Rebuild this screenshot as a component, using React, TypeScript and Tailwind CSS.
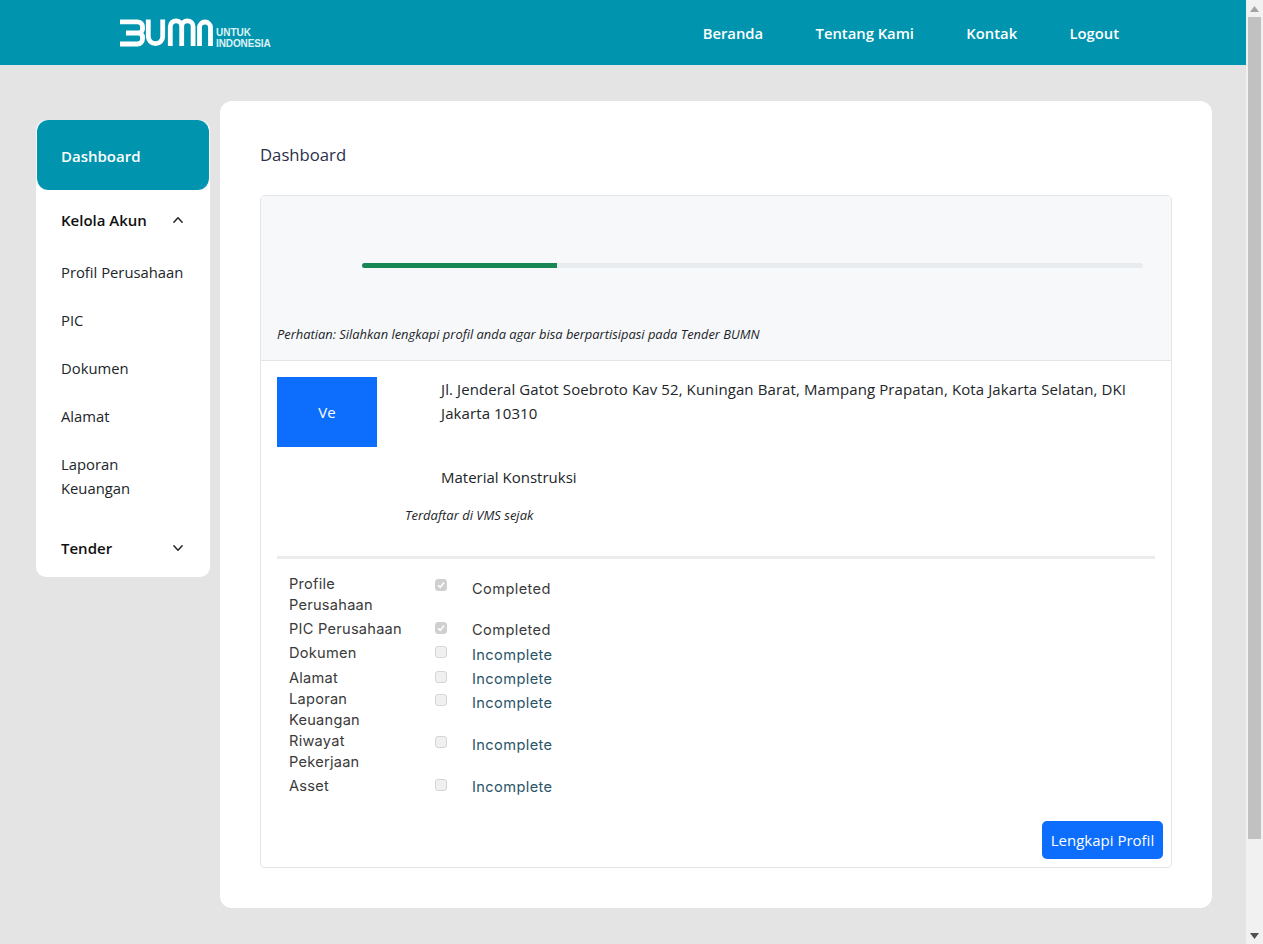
import React from "react";

const seg = "font-['Open_Sans','Noto_Sans',sans-serif]";

function Logo() {
  return (
    <div className="flex items-center">
      <svg width="96" height="30" viewBox="0 0 96 30" fill="none" stroke="#fff" strokeWidth="4.8">
        <path d="M0 3.8H17.5A5 5 0 0 1 22.5 8.8V11A4 4 0 0 1 18.5 15H6M18.5 15A4 4 0 0 1 22.5 19V21A5 5 0 0 1 17.5 26H0" />
        <path d="M28.3 1.5V18.5A7.2 7.2 0 0 0 42.7 18.5V1.5" />
        <path d="M50.3 28V8.5A5.7 5.7 0 0 1 61.7 8.5V28M61.7 8.5A5.7 5.7 0 0 1 73.1 8.5V28" />
        <path d="M79.5 28V9.5A5.5 5.5 0 0 1 90.5 9.5V28" />
      </svg>
      <div className="mt-[10px] font-['Liberation_Sans',sans-serif] text-[10px] leading-[11px] font-bold text-[#dff3f7]">
        <div>UNTUK</div>
        <div className="tracking-[-0.1px]">INDONESIA</div>
      </div>
    </div>
  );
}

function Chevron({ up }: { up?: boolean }) {
  return (
    <svg width="12" height="12" viewBox="0 0 16 16" fill="none" stroke="#212529" strokeWidth="2" strokeLinecap="round" strokeLinejoin="round">
      <path d={up ? "M2.5 11L8 5l5.5 6" : "M2.5 5L8 11l5.5-6"} />
    </svg>
  );
}

function Check({ checked }: { checked?: boolean }) {
  return (
    <span className={"flex h-3 w-3 items-center justify-center rounded-[3px] border " + (checked ? "border-[#cfcfcf] bg-[#cfcfcf]" : "border-[#d5d5d5] bg-[#f0f0f0]")}>
      {checked && (
        <svg width="10" height="10" viewBox="0 0 10 10" fill="none" stroke="#fff" strokeWidth="1.6">
          <path d="M2 5.2L4.2 7.4 8 2.6" />
        </svg>
      )}
    </span>
  );
}

const rows = [
  { l: ["Profile", "Perusahaan"], done: true, h: "h-[45px]", lab: "pt-0", box: "pt-[5px]", st: "pt-[5px]" },
  { l: ["PIC Perusahaan"], done: true, h: "h-[23px]", lab: "pt-0", box: "pt-[3px]", st: "pt-[1px]" },
  { l: ["Dokumen"], done: false, h: "h-[25px]", lab: "pt-[1px]", box: "pt-[4px]", st: "pt-[3px]" },
  { l: ["Alamat"], done: false, h: "h-[22px]", lab: "pt-[1px]", box: "pt-[4px]", st: "pt-[2px]" },
  { l: ["Laporan", "Keuangan"], done: false, h: "h-[42px]", lab: "pt-0", box: "pt-[5px]", st: "pt-[4px]" },
  { l: ["Riwayat", "Pekerjaan"], done: false, h: "h-[45px]", lab: "pt-0", box: "pt-[5px]", st: "pt-[4px]" },
  { l: ["Asset"], done: false, h: "h-[24px]", lab: "pt-0", box: "pt-[3px]", st: "pt-[1px]" },
];

export default function App() {
  return (
    <div className={"flex h-[944px] w-full overflow-hidden bg-[#e4e4e4] text-[#212529] " + seg}>
      <div className="min-w-0 flex-1">
        <header className="flex h-[65px] items-center bg-[#0094ae] pl-[120px]">
          <Logo />
          <nav className="ml-[432px] flex gap-[52.4px] pt-[1px] text-[14.8px] font-semibold text-white">
            <span>Beranda</span>
            <span>Tentang Kami</span>
            <span>Kontak</span>
            <span>Logout</span>
          </nav>
        </header>
        <div className="flex items-start pl-[36px] pt-[36px]">
          <aside className="mt-[19px] h-[457px] w-[174px] rounded-[10px] bg-white text-[14.8px]">
            <div className="mb-px flex h-[70px] items-center rounded-[12px] border-x border-white bg-[#0094ae] pl-[24px] pt-[2px] text-[15px] font-semibold text-white">Dashboard</div>
            <div className="flex h-[58px] items-center justify-between pl-[25px] pr-[26px] text-[15px] font-semibold text-[#111]">
              <span>Kelola Akun</span>
              <Chevron up />
            </div>
            <div className="flex flex-col gap-[28px] pl-[25px] pt-[13px] leading-[20px]">
              <span>Profil Perusahaan</span>
              <span>PIC</span>
              <span>Dokumen</span>
              <span>Alamat</span>
              <span className="-mt-[2px] leading-[24px]">Laporan<br />Keuangan</span>
            </div>
            <div className="mt-[28px] flex h-[40px] items-center justify-between pl-[25px] pr-[26px] text-[15px] font-semibold text-[#111]">
              <span>Tender</span>
              <Chevron />
            </div>
          </aside>
          <main className="ml-[10px] h-[807px] w-[992px] rounded-[12px] bg-white px-[40px] pt-[42px]">
            <h1 className="text-[16.7px] leading-[24px] text-[#2b2f4a]">Dashboard</h1>
            <section className="mt-[28px] h-[673px] rounded-[4px] border border-[#e3e5e8]">
              <div className="h-[165px] border-b border-[#e3e5e8] bg-[#f7f8fa] pl-[16px]">
                <div className="ml-[85px] mr-[28px] pt-[67px]">
                  <div className="h-[5px] overflow-hidden rounded-full bg-[#e9ecef]">
                    <div className="h-full w-1/4 bg-[#198754]" />
                  </div>
                </div>
                <p className="mt-[58px] text-[12.9px] italic leading-[16px]">Perhatian: Silahkan lengkapi profil anda agar bisa berpartisipasi pada Tender BUMN</p>
              </div>
              <div className="px-[16px] pt-[16px]">
                <div className="flex">
                  <div className="flex h-[70px] w-[100px] shrink-0 items-center justify-center bg-[#0d6efd] text-[15px] text-white">Ve</div>
                  <div className="ml-[64px] text-[15px] leading-[24px]">
                    <p className="tracking-[0.1px]">Jl. Jenderal Gatot Soebroto Kav 52, Kuningan Barat, Mampang Prapatan, Kota Jakarta Selatan, DKI Jakarta 10310</p>
                    <p className="mt-[40px]">Material Konstruksi</p>
                  </div>
                </div>
                <p className="ml-[128px] mt-[18px] text-[13px] italic leading-[16px]">Terdaftar di VMS sejak</p>
                <hr className="mt-[33px] border-t-[3px] border-[#ececec]" />
                <div className="mt-[15px] pl-[12px] font-['Inter',sans-serif] text-[14.6px] leading-[21px] text-[#3a3a3a]">
                  {rows.map((r) => (
                    <div key={r.l.join()} className={"flex " + r.h}>
                      <div className={"w-[146px] shrink-0 tracking-[0.25px] " + r.lab}>
                        {r.l.map((t) => (<div key={t}>{t}</div>))}
                      </div>
                      <div className={"w-[37px] shrink-0 " + r.box}><Check checked={r.done} /></div>
                      <div className={"tracking-[0.4px] " + r.st + (r.done ? " text-[#3a3a3a]" : " text-[#2a5468]")}>{r.done ? "Completed" : "Incomplete"}</div>
                    </div>
                  ))}
                </div>
              </div>
              <div className="mt-[21px] flex justify-end pr-[8px]">
                <button className="h-[38px] w-[121px] rounded-[5px] bg-[#0d6efd] text-[15px] text-white">Lengkapi Profil</button>
              </div>
            </section>
          </main>
        </div>
      </div>
      <div className="flex h-[944px] w-[17px] shrink-0 flex-col bg-[#f1f1f1]">
        <div className="flex h-[17px] items-center justify-center">
          <svg width="9" height="6" viewBox="0 0 9 6"><path d="M4.5 0L9 6H0z" fill="#a3a3a3" /></svg>
        </div>
        <div className="mx-[2px] h-[822px] bg-[#c1c1c1]" />
        <div className="flex-1" />
        <div className="flex h-[17px] items-center justify-center">
          <svg width="9" height="6" viewBox="0 0 9 6"><path d="M4.5 6L9 0H0z" fill="#505050" /></svg>
        </div>
      </div>
    </div>
  );
}
